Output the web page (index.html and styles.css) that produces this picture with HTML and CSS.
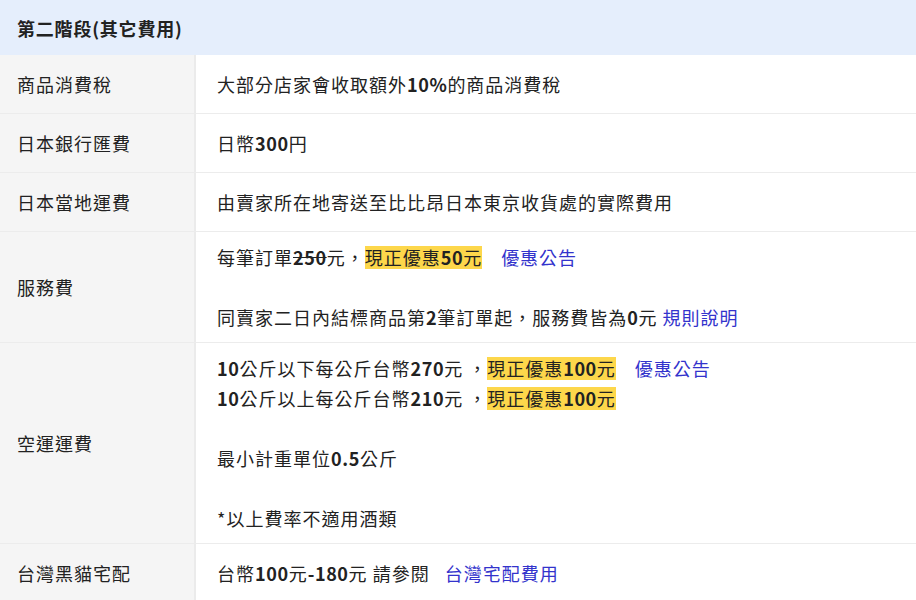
FILE: index.html
```html
<!DOCTYPE html>
<html lang="zh-Hant">
<head>
<meta charset="utf-8">
<link rel="stylesheet" href="styles.css">
</head>
<body>
<div class="fees">
  <div class="head">第二階段(其它費用)</div>
  <div class="row">
    <div class="label">商品消費稅</div>
    <div class="value"><p>大部分店家會收取額外<span class="n">10%</span>的商品消費稅</p></div>
  </div>
  <div class="row">
    <div class="label">日本銀行匯費</div>
    <div class="value"><p>日幣<span class="n">300</span>円</p></div>
  </div>
  <div class="row">
    <div class="label">日本當地運費</div>
    <div class="value"><p>由賣家所在地寄送至比比昂日本東京收貨處的實際費用</p></div>
  </div>
  <div class="row">
    <div class="label">服務費</div>
    <div class="value">
      <p>每筆訂單<s class="n">250</s>元，<mark>現正優惠<span class="n">50</span>元</mark><a class="link gap">優惠公告</a></p>
      <p class="blank"></p>
      <p>同賣家二日內結標商品第<span class="n">2</span>筆訂單起，服務費皆為<span class="n">0</span>元 <a class="link">規則說明</a></p>
    </div>
  </div>
  <div class="row">
    <div class="label">空運運費</div>
    <div class="value">
      <p><span class="n">10</span>公斤以下每公斤台幣<span class="n">270</span>元 ，<mark>現正優惠<span class="n">100</span>元</mark><a class="link gap">優惠公告</a></p>
      <p><span class="n">10</span>公斤以上每公斤台幣<span class="n">210</span>元 ，<mark>現正優惠<span class="n">100</span>元</mark></p>
      <p class="blank"></p>
      <p>最小計重單位<span class="n">0.5</span>公斤</p>
      <p class="blank"></p>
      <p>*以上費率不適用酒類</p>
    </div>
  </div>
  <div class="row">
    <div class="label">台灣黑貓宅配</div>
    <div class="value"><p>台幣<span class="n">100</span>元<span class="n">-180</span>元 請參閱 <a class="link gap-s">台灣宅配費用</a></p></div>
  </div>
</div>
</body>
</html>
```
FILE: styles.css
```css
html, body {
  margin: 0;
  padding: 0;
  background: #ffffff;
}
body {
  font-family: "Noto Sans CJK TC", "Noto Sans", sans-serif;
  font-size: 18px;
  color: #222222;
  letter-spacing: 1px;
}
.fees {
  width: 916px;
}
.head {
  height: 55px;
  display: flex;
  align-items: center;
  padding-left: 17px;
  background: #e5eefc;
  font-weight: 700;
  color: #222;
  letter-spacing: 0.8px;
}
.row {
  display: grid;
  grid-template-columns: 196px 1fr;
  min-height: 58px;
  border-bottom: 1px solid #ececec;
}
.label {
  display: flex;
  align-items: center;
  padding-left: 17px;
  background: #f5f5f5;
  border-right: 2px solid #ebebeb;
}
.value {
  display: flex;
  flex-direction: column;
  justify-content: center;
  padding: 10px 0 10px 21px;
}
.value p {
  margin: 0;
  line-height: 30px;
  white-space: nowrap;
}
.value p.blank {
  height: 30px;
}
.n {
  font-weight: 600;
  letter-spacing: 0.6px;
}
mark {
  display: inline-block;
  line-height: 23px;
  background: #fdd74b;
  color: #222;
}
.link {
  color: #3333cc;
  cursor: pointer;
}
.gap {
  margin-left: 19px;
}
.gap-s {
  margin-left: 10px;
}
```
